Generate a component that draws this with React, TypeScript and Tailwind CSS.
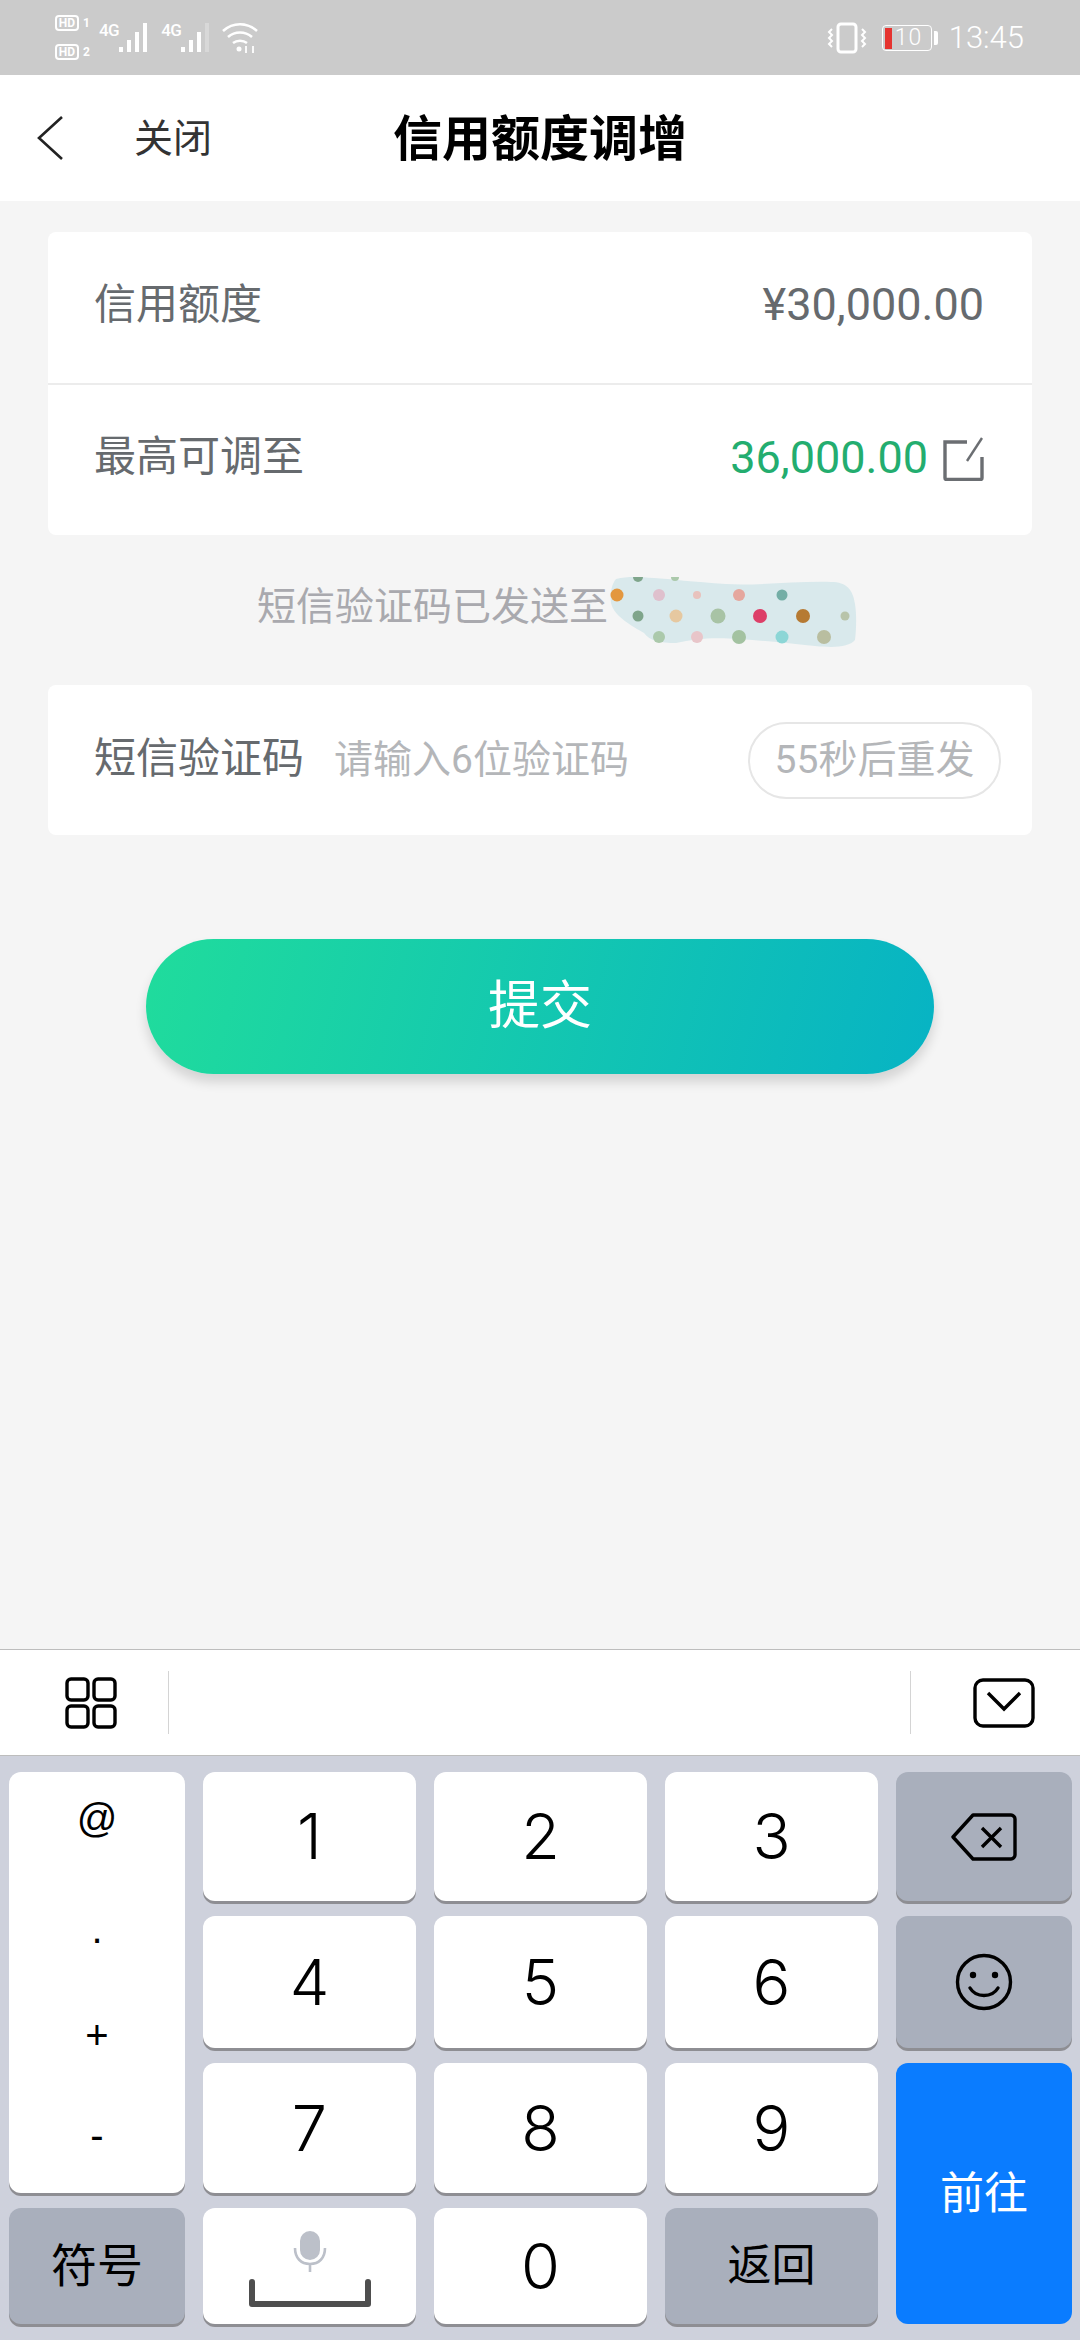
const CJK = "font-['Roboto','Noto_Sans_CJK_SC',sans-serif]"

function SignalBars({ dim }: { dim?: boolean }) {
  return (
    <svg width="32" height="32" viewBox="0 0 32 32" fill="#fff">
      <rect x="0" y="25" width="4" height="5" />
      <rect x="8" y="18" width="4" height="12" />
      <rect x="16" y="10" width="4" height="20" />
      <rect x="24" y="1" width="4" height="29" opacity={dim ? 0.25 : 1} />
    </svg>
  )
}

function HdMark({ n }: { n: string }) {
  return (
    <div className="flex h-[16px] items-center gap-[4px]">
      <span className="flex h-[16px] w-[24px] items-center justify-center rounded-[4px] border-2 border-white font-['Roboto',sans-serif] text-[12px] leading-none font-bold text-white">
        HD
      </span>
      <span className="font-['Roboto',sans-serif] text-[12px] leading-none font-bold text-white">{n}</span>
    </div>
  )
}

function StatusBar() {
  return (
    <div className="flex h-[75px] shrink-0 items-center bg-[#cbcbcb] pr-[56px] pl-[55px]">
      <div className="flex flex-col gap-[13px]">
        <HdMark n="1" />
        <HdMark n="2" />
      </div>
      <span className="mb-[15px] ml-[9px] font-['Roboto',sans-serif] text-[17px] leading-none font-medium tracking-[-0.5px] text-white">4G</span>
      <SignalBars />
      <span className="mb-[15px] ml-[10px] font-['Roboto',sans-serif] text-[17px] leading-none font-medium tracking-[-0.5px] text-white">4G</span>
      <SignalBars dim />
      <svg className="ml-[9px]" width="36" height="32" viewBox="0 0 36 32" fill="none" stroke="#fff" strokeWidth="2.6">
        <path d="M1 9c10-9 24-9 34 0" />
        <path d="M6 15c7-6 17-6 24 0" />
        <path d="M11 21c4-3 10-3 14 0" />
        <circle cx="17" cy="27" r="2.5" fill="#fff" stroke="none" />
        <path d="M24 31v-7M31 31v-7" strokeWidth="1.8" />
      </svg>
      <div className="ml-auto flex items-center">
        <svg width="40" height="32" viewBox="0 0 40 32" fill="none" stroke="#fff" strokeWidth="2.4">
          <rect x="11" y="2" width="18" height="28" rx="3" strokeWidth="3" />
          <path d="M5 7l-3 3 3 3-3 3 3 3-3 3 3 3M35 7l3 3-3 3 3 3-3 3 3 3-3 3" strokeWidth="2" />
        </svg>
        <div className="relative ml-[15px] flex h-[26px] w-[50px] items-center rounded-[4px] border border-white pl-[12px]">
          <div className="absolute top-[2px] left-[2px] h-[21px] w-[7px] bg-[#e5332f]" />
          <span className="font-['Roboto',sans-serif] text-[23px] leading-none font-light tracking-[1px] text-white">10</span>
        </div>
        <div className="ml-[2px] h-[14px] w-[4px] rounded-r-[2px] bg-white" />
        <span className="ml-[11px] font-['Roboto',sans-serif] text-[31px] leading-none font-light text-white">13:45</span>
      </div>
    </div>
  )
}

function NavBar() {
  return (
    <div className="grid h-[126px] shrink-0 grid-cols-[1fr_auto_1fr] items-center bg-white">
      <div className="flex items-center pl-[36px]">
        <svg width="28" height="46" viewBox="0 0 28 46" fill="none" stroke="#222" strokeWidth="2.6">
          <path d="M26 2L3 23l23 21" />
        </svg>
        <span className={`mt-[2px] ml-[70px] text-[39px] leading-none text-[#333] ${CJK}`}>关闭</span>
      </div>
      <h1 className={`mt-[2px] text-[49px] leading-none font-bold text-black ${CJK}`}>信用额度调增</h1>
      <div />
    </div>
  )
}

function RedactBlob() {
  const dots: [number, number, number, string][] = [
    [9, 18, 6.5, '#e3973f'], [51, 18, 6, '#dfc0cd'], [89, 18, 4, '#e8c2bd'], [131, 18, 6, '#e5a79e'], [174, 18, 5.5, '#74aea6'],
    [30, 39, 5.5, '#7fa58b'], [68, 39, 6.5, '#e6c8a0'], [110, 39, 7.5, '#a8c3a5'], [152, 39, 7, '#dd3f68'], [195, 39, 7, '#b67a33'], [237, 39, 4.5, '#b8c4aa'],
    [51, 60, 6, '#abc9ab'], [89, 60, 6, '#e8c5c9'], [131, 60, 7, '#a3c2a1'], [174, 60, 6.5, '#8cd6d6'], [216, 60, 7, '#b9bea0'],
    [30, 0, 5, '#7fa58b'], [67, 0, 4, '#abc9ab'],
  ]
  return (
    <svg className="mt-[4px] shrink-0" width="250" height="71" viewBox="0 0 250 71">
      <path
        d="M8 2C20 -1 32 0 46 1c16 1 40 4 72 6 30 2 70-3 105-2 16 0 22 8 24 22 2 12 1 28 0 36-6 7-20 8-40 6-30-3-50-5-75-7-30-2-45 0-64 4-16 0-26-2-32-10C26 50 6 40 3 26 2 18 3 8 8 2z"
        fill="#d9e9ec"
      />
      {dots.map(([cx, cy, r, fill]) => (
        <circle key={`${cx}-${cy}`} cx={cx} cy={cy} r={r} fill={fill} />
      ))}
    </svg>
  )
}

function LimitCard() {
  return (
    <div className="flex h-[303px] flex-col rounded-[8px] bg-white px-[46px]">
      <div className="flex h-[151px] items-center justify-between pr-[2px] pb-[6px]">
        <span className="text-[42px] leading-none text-[#666a6e]">信用额度</span>
        <span className="text-[45px] leading-none text-[#666a6e]">¥30,000.00</span>
      </div>
      <div className="-mx-[46px] h-[2px] shrink-0 bg-[#ececec]" />
      <div className="flex h-[150px] items-center justify-between pb-[6px]">
        <span className="text-[42px] leading-none text-[#666a6e]">最高可调至</span>
        <div className="flex items-center">
          <span className="text-[45px] leading-none text-[#23ad6f]">36,000.00</span>
          <svg className="mt-[3px] mr-[2px] ml-[15px]" width="41" height="44" viewBox="0 0 41 44" fill="none" stroke="#6b6e72" strokeWidth="3.4">
            <path d="M24 5H2v36c0 1 .5 1.5 1.5 1.5h34c1 0 1.5-.5 1.5-1.5V20" />
            <path d="M39 1L24 24" strokeWidth="2.4" />
          </svg>
        </div>
      </div>
    </div>
  )
}

function SmsCard() {
  return (
    <div className="flex h-[150px] items-center rounded-[8px] bg-white pr-[31px] pl-[46px]">
      <span className="mb-[2px] text-[42px] leading-none text-[#666a6e]">短信验证码</span>
      <span className="ml-[30px] text-[39px] leading-none text-[#b4b6b9]">请输入6位验证码</span>
      <span className="ml-auto flex h-[77px] w-[253px] items-center justify-center rounded-full border-2 border-[#e6e6e6] text-[39px] leading-none text-[#b4b6b9]">
        55秒后重发
      </span>
    </div>
  )
}

function Toolbar() {
  return (
    <div className="flex h-[107px] shrink-0 items-center border-y border-y-[#bdbdbd] bg-white">
      <div className="flex w-[168px] justify-center pl-[14px]">
        <svg width="52" height="52" viewBox="0 0 52 52" fill="none" stroke="#000" strokeWidth="3.4">
          <rect x="2" y="2" width="21" height="21" rx="4" />
          <rect x="29" y="2" width="21" height="21" rx="4" />
          <rect x="2" y="29" width="21" height="21" rx="4" />
          <rect x="29" y="29" width="21" height="21" rx="4" />
        </svg>
      </div>
      <div className="h-[63px] w-px bg-[#d4d4d4]" />
      <div className="flex-1" />
      <div className="h-[63px] w-px bg-[#d4d4d4]" />
      <div className="flex w-[169px] justify-center pl-[16px]">
        <svg width="62" height="50" viewBox="0 0 62 50" fill="none" stroke="#000" strokeWidth="3.4">
          <rect x="2" y="2" width="58" height="46" rx="8" />
          <path d="M15 15l16 16 16-16" />
        </svg>
      </div>
    </div>
  )
}

const digitClass =
  "flex items-center justify-center rounded-[12px] bg-white font-['Inter',sans-serif] text-[63px] leading-none font-light text-black shadow-[0_3px_0_#8e8e93]"
const grayClass = 'flex items-center justify-center rounded-[12px] bg-[#a9afbc] text-black shadow-[0_3px_0_#8e8e93]'

function Keyboard() {
  return (
    <div className="grid h-[584px] shrink-0 grid-cols-[176px_213px_213px_213px_176px] grid-rows-[129px_132px_130px_116px] gap-x-[18px] gap-y-[15px] bg-[#ced1dc] pt-[16px] pl-[9px]">
      <div className="row-span-3 flex flex-col overflow-hidden rounded-[12px] bg-white font-['Liberation_Sans',sans-serif] text-[40px] leading-none text-black shadow-[0_3px_0_#8e8e93]">
        <div className="flex h-[92px] shrink-0 items-center justify-center">@</div>
        <div className="flex h-[130px] shrink-0 items-center justify-center">.</div>
        <div className="flex h-[82px] shrink-0 items-center justify-center">+</div>
        <div className="flex h-[118px] shrink-0 items-center justify-center">-</div>
      </div>
      <div className={digitClass}>1</div>
      <div className={digitClass}>2</div>
      <div className={digitClass}>3</div>
      <div className={grayClass}>
        <svg width="66" height="48" viewBox="0 0 66 48" fill="none" stroke="#000" strokeWidth="3.4" strokeLinejoin="round">
          <path d="M22 2h38c2 0 4 2 4 4v36c0 2-2 4-4 4H22L2 24z" />
          <path d="M31 15l19 19M50 15L31 34" />
        </svg>
      </div>
      <div className={digitClass}>4</div>
      <div className={digitClass}>5</div>
      <div className={digitClass}>6</div>
      <div className={grayClass}>
        <svg width="58" height="58" viewBox="0 0 58 58" fill="none" stroke="#000" strokeWidth="3.4">
          <circle cx="29" cy="29" r="26.5" />
          <circle cx="18" cy="22" r="3.2" fill="#000" stroke="none" />
          <circle cx="40" cy="22" r="3.2" fill="#000" stroke="none" />
          <path d="M15 35c6 10 22 10 28 0" strokeLinecap="round" />
        </svg>
      </div>
      <div className={digitClass}>7</div>
      <div className={digitClass}>8</div>
      <div className={digitClass}>9</div>
      <div className="row-span-2 flex items-center justify-center rounded-[12px] bg-[#0a7cff] text-[44px] leading-none text-white">
        前往
      </div>
      <div className={`${grayClass} text-[46px] leading-none`}>符号</div>
      <div className="flex items-center justify-center rounded-[12px] bg-white pt-[6px] shadow-[0_3px_0_#8e8e93]">
        <svg width="122" height="76" viewBox="0 0 122 76" fill="none">
          <rect x="51" y="0" width="20" height="29" rx="10" fill="#bcc0c9" />
          <path d="M46 17c0 10 6 16 15 16s15-6 15-16M61 33v8" stroke="#bcc0c9" strokeWidth="2.6" />
          <path d="M3 51v22h116V51" stroke="#4e4e4e" strokeWidth="6" strokeLinejoin="round" strokeLinecap="round" />
        </svg>
      </div>
      <div className={digitClass}>0</div>
      <div className={`${grayClass} text-[44px] leading-none`}>返回</div>
    </div>
  )
}

export default function App() {
  return (
    <div className={`flex h-[2340px] w-[1080px] flex-col overflow-hidden bg-[#f5f5f5] ${CJK}`}>
      <StatusBar />
      <NavBar />
      <main className="flex-1 px-[48px] pt-[31px]">
        <LimitCard />
        <div className="flex h-[150px] items-center pl-[209px]">
          <span className="mb-[6px] text-[39px] leading-none whitespace-nowrap text-[#a9a9ae]">短信验证码已发送至</span>
          <RedactBlob />
        </div>
        <SmsCard />
        <button className="mx-auto mt-[104px] flex h-[135px] w-[788px] items-center justify-center rounded-full bg-[linear-gradient(105deg,#20dc9c,#07b3c4)] text-[52px] leading-none text-white shadow-[0_8px_12px_rgba(0,0,0,0.14)]">
          提交
        </button>
      </main>
      <Toolbar />
      <Keyboard />
    </div>
  )
}
